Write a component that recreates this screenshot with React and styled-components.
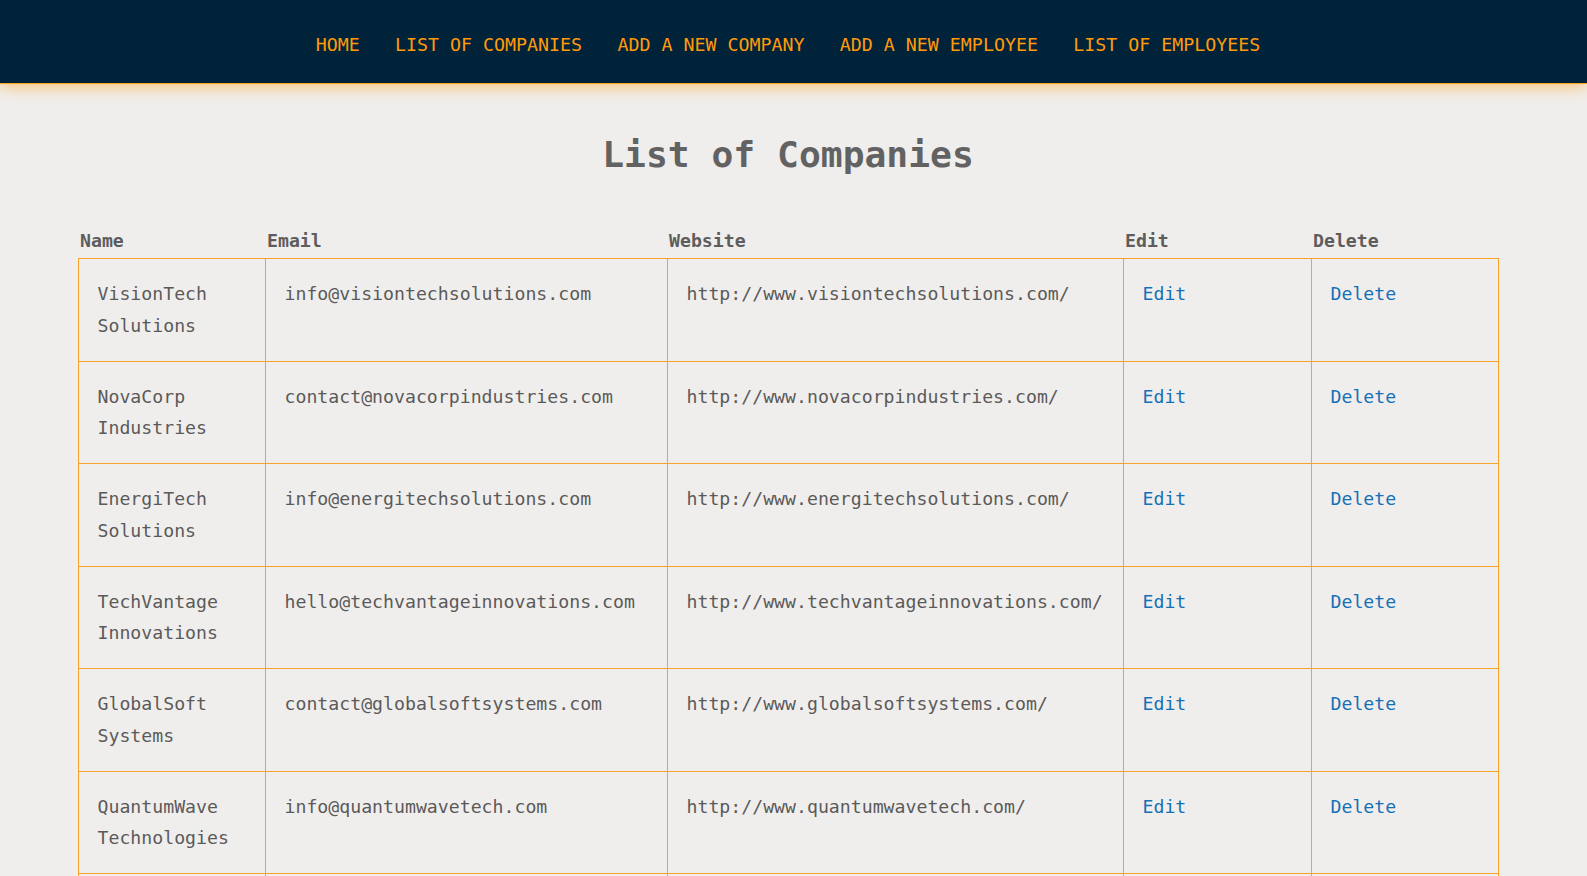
import React from "react";
import styled, { createGlobalStyle } from "styled-components";

const Global = createGlobalStyle`
  html, body { margin: 0; padding: 0; background: #f0eeec; }
  body { font-family: "DejaVu Sans Mono", "Liberation Mono", monospace; overflow: hidden; }
`;

const Nav = styled.nav`
  box-sizing: border-box;
  height: 84px;
  background: #00233a;
  border-bottom: 1px solid #ffa21c;
  box-shadow: 0 3px 14px rgba(255, 170, 40, 0.6);
  padding: 34px 11px 0 0;
  display: flex;
  justify-content: center;
  gap: 35.3px;
  position: relative;
  z-index: 1;
`;

const NavLink = styled.a`
  color: #ff9a0a;
  font-size: 18.3px;
  line-height: 21px;
  text-decoration: none;
  text-transform: uppercase;
  white-space: nowrap;
`;

const Main = styled.main`
  padding: 0 11px 0 0;
  display: flex;
  flex-direction: column;
  align-items: center;
`;

const Title = styled.h1`
  margin: 50px 0 0;
  font-size: 36.3px;
  line-height: 42px;
  font-weight: bold;
  color: #636262;
`;

const Table = styled.table`
  margin-top: 50px;
  width: 1420px;
  table-layout: fixed;
  border-collapse: collapse;
  font-size: 18.2px;
  color: #5b5a5a;
`;

const Th = styled.th`
  text-align: left;
  font-weight: bold;
  padding: 4px 2px 7px;
  line-height: 21px;
  color: #5e5d5d;
`;

const Td = styled.td`
  border: 1px solid #f6a32b;
  padding: 19px 16px 19px 19px;
  line-height: 31.75px;
  vertical-align: top;
  overflow-wrap: break-word;
`;

const Action = styled.a`
  color: #1670b6;
  text-decoration: none;
`;

const cols = [187, 402, 456, 188, 187];

const companies = [
  ["VisionTech Solutions", "info@visiontechsolutions.com", "http://www.visiontechsolutions.com/"],
  ["NovaCorp Industries", "contact@novacorpindustries.com", "http://www.novacorpindustries.com/"],
  ["EnergiTech Solutions", "info@energitechsolutions.com", "http://www.energitechsolutions.com/"],
  ["TechVantage Innovations", "hello@techvantageinnovations.com", "http://www.techvantageinnovations.com/"],
  ["GlobalSoft Systems", "contact@globalsoftsystems.com", "http://www.globalsoftsystems.com/"],
  ["QuantumWave Technologies", "info@quantumwavetech.com", "http://www.quantumwavetech.com/"],
  ["BrightPath Consulting", "info@brightpathconsulting.com", "http://www.brightpathconsulting.com/"],
  ["Apex Dynamics", "contact@apexdynamics.com", "http://www.apexdynamics.com/"],
];

export default function App() {
  return (
    <>
      <Global />
      <Nav>
        {["Home", "List of Companies", "Add a new Company", "Add a new Employee", "List of Employees"].map((t) => (
          <NavLink key={t} href="#">{t}</NavLink>
        ))}
      </Nav>
      <Main>
        <Title>List of Companies</Title>
        <Table>
          <colgroup>
            {cols.map((w, i) => (
              <col key={i} style={{ width: w }} />
            ))}
          </colgroup>
          <thead>
            <tr>
              <Th>Name</Th>
              <Th>Email</Th>
              <Th>Website</Th>
              <Th>Edit</Th>
              <Th>Delete</Th>
            </tr>
          </thead>
          <tbody>
            {companies.map(([n, e, w]) => (
              <tr key={n}>
                <Td>{n}</Td>
                <Td>{e}</Td>
                <Td>{w}</Td>
                <Td><Action href="#">Edit</Action></Td>
                <Td><Action href="#">Delete</Action></Td>
              </tr>
            ))}
          </tbody>
        </Table>
      </Main>
    </>
  );
}
